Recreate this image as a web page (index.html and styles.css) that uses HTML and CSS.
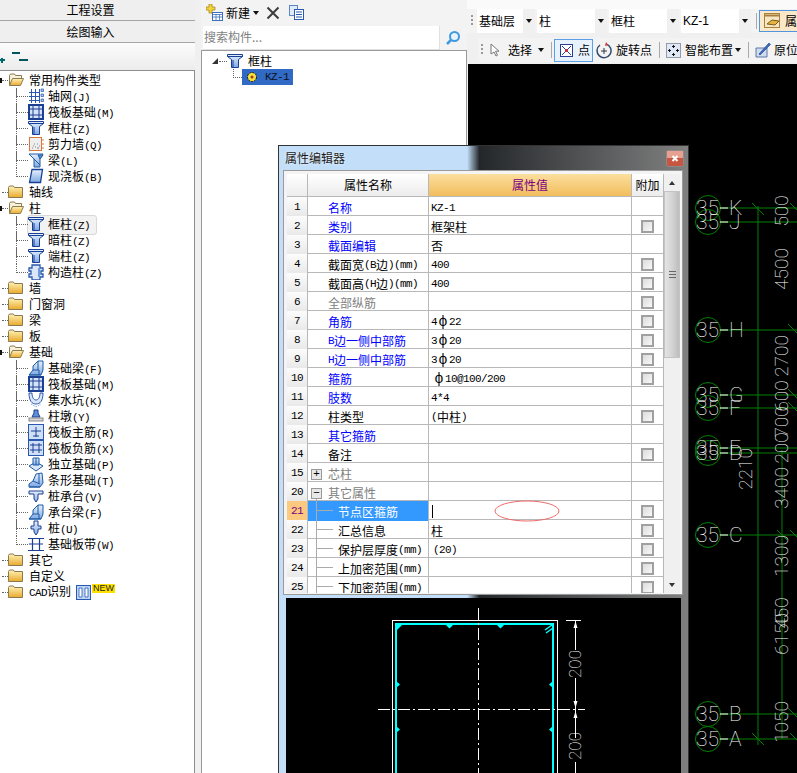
FILE: index.html
```html
<!DOCTYPE html>
<html lang="zh-CN">
<head>
<meta charset="utf-8">
<title>属性编辑器</title>
<link rel="stylesheet" href="styles.css">
</head>
<body>
<svg class="defs" aria-hidden="true">
  <defs>
    <linearGradient id="gy" x1="0" y1="0" x2="0" y2="1"><stop offset="0" stop-color="#fff3b8"/><stop offset="1" stop-color="#e9a92c"/></linearGradient>
    <linearGradient id="gb" x1="0" y1="0" x2="0" y2="1"><stop offset="0" stop-color="#e8f1fc"/><stop offset="1" stop-color="#7fa8e2"/></linearGradient>
    <symbol id="fold" viewBox="0 0 16 16"><path d="M.5 3.5l1-1.500h4l1 1.500h8v10h-14z" fill="url(#gy)" stroke="#8a7a50"/></symbol>
    <symbol id="fopen" viewBox="0 0 16 16"><path d="M1.500 13.500v-10l1-1.500h4l1 1.500h6v3" fill="#f6f0dc" stroke="#8a7a50"/><path d="M1.500 13.500l3-7h11l-3 7z" fill="url(#gy)" stroke="#8a7a50"/></symbol>
    <symbol id="col" viewBox="0 0 16 16"><path d="M.5 1.500h15v2l-4 3v8h-7v-8l-4-3z" fill="url(#gb)" stroke="#173f96"/><path d="M.5 3.500h15M6 7v7" fill="none" stroke="#173f96"/></symbol>
    <symbol id="grid" viewBox="0 0 16 16"><path d="M3.500 1v14M7.500 1v14M11.500 1v14M1 4.500h11M1 8.500h11M1 12.500h11" fill="none" stroke="#2a58b0"/><path d="M13 1h2.500v2.500H13zM13 6h2.500v2.500H13zM13 11h2.500v2.500H13z" fill="#a9c4ee" stroke="#2a58b0" stroke-width=".7"/></symbol>
    <symbol id="raft" viewBox="0 0 16 16"><rect x="1" y="1" width="14" height="14" fill="#d5e3f7" stroke="#1c3f94" stroke-width="2"/><path d="M5 1v14M11 1v14M1 5h14M1 11h14" fill="none" stroke="#1c3f94"/></symbol>
    <symbol id="wall" viewBox="0 0 16 16"><rect x="1.500" y="1.500" width="12" height="13" fill="#eee" stroke="#d8783c"/><path d="M4 12h1M7 11h1M9 12h2M6 8h1M9 8h1M11 10h1M5 10h1" stroke="#888"/><path d="M14 4h2M14 8h2M14 12h2" stroke="#d8783c"/></symbol>
    <symbol id="beam" viewBox="0 0 16 16"><path d="M1 2h14l-3 5v8H6V7z" fill="url(#gb)" stroke="#1c5aa6"/><path d="M10 3l5 0-3 4zM6 7l6 6" fill="#5f93d6" stroke="#1c5aa6"/></symbol>
    <symbol id="slab" viewBox="0 0 16 16"><path d="M4 1.500h10.500l-2 13H1.500z" fill="url(#gb)" stroke="#173f96" stroke-width="1.300"/></symbol>
    <symbol id="gz" viewBox="0 0 16 16"><path d="M4 1h8v3h3v3h-2v3h2v3h-3v3H4v-3H1v-3h2V7H1V4h3z" fill="#dbe7f8" stroke="#2a58b0" stroke-width="1.300"/><path d="M10 4h2v9h-2z" fill="#6f98d8"/></symbol>
    <symbol id="fbeam" viewBox="0 0 16 16"><path d="M1 15l4-5V6l5-5h5v9l-2 5z" fill="url(#gb)" stroke="#1c5aa6"/><path d="M5 10h6v5M1 15h12M10 1v9" fill="none" stroke="#1c5aa6"/></symbol>
    <symbol id="pit" viewBox="0 0 16 16"><path d="M1 1h3c0 5 2 7 4 7s4-2 4-7h3c0 8-3 11-7 11S1 9 1 1z" fill="#dbe7f8" stroke="#2a58b0"/><path d="M3 12l5 3 5-3" fill="none" stroke="#6f98d8" stroke-dasharray="1 1"/></symbol>
    <symbol id="pier" viewBox="0 0 16 16"><path d="M6 2h4v3l2 4H4l2-4z" fill="#5f8fd6" stroke="#1c3f94"/><rect x="1" y="10" width="14" height="3" fill="#d8d8d8" stroke="#888"/></symbol>
    <symbol id="rmain" viewBox="0 0 16 16"><rect x=".5" y=".5" width="15" height="15" fill="#cfdff6" stroke="#2a58b0"/><path d="M8 3v10M3 7h10M5 12h6" fill="none" stroke="#1c3f94"/></symbol>
    <symbol id="rneg" viewBox="0 0 16 16"><rect x=".5" y=".5" width="15" height="15" fill="#cfdff6" stroke="#2a58b0"/><path d="M2 5h12M2 10h12M5 3v10M11 3v10" fill="none" stroke="#1c3f94"/></symbol>
    <symbol id="ifound" viewBox="0 0 16 16"><path d="M1 10l7-4 7 4-7 5z" fill="#dbe7f8" stroke="#1c5aa6"/><path d="M5 2h6v7H5z" fill="url(#gb)" stroke="#1c5aa6"/><path d="M8 2v7" stroke="#1c5aa6"/></symbol>
    <symbol id="strip" viewBox="0 0 16 16"><path d="M1 15v-3l4-3 3-7 6-1 1 10-3 4z" fill="url(#gb)" stroke="#1c5aa6"/><path d="M1 15h11M5 9l7 3M11 2v9" fill="none" stroke="#1c5aa6"/></symbol>
    <symbol id="cap" viewBox="0 0 16 16"><path d="M1 3h14v3H10v5l-2 3-2-3V6H1z" fill="url(#gb)" stroke="#1c3f94"/></symbol>
    <symbol id="pile" viewBox="0 0 16 16"><path d="M6 1h4v5h3v3h-3v3l-2 3-2-3V9H3V6h3z" fill="url(#gb)" stroke="#1c3f94"/></symbol>
    <symbol id="band" viewBox="0 0 16 16"><path d="M0 2.500h16M0 14.500h16M4.500 3v11M11.500 3v11M1 8h14" fill="none" stroke="#1c3f94" stroke-width="1.200"/></symbol>
  </defs>
</svg>

<div class="app">
  <aside class="left">
    <div class="nav-btn">工程设置</div>
    <div class="nav-btn">绘图输入</div>
    <div class="tree-tools">
      <svg class="tools-svg" width="30" height="14" viewBox="0 0 30 14"><path d="M0 8h5M2 6v5" stroke="#006a6a" stroke-width="2"/><path d="M12 1h8M19 8h9" stroke="#00565a" stroke-width="2"/></svg>
    </div>
    <div class="tree">
      <div class="top"><i class="exp"></i><i class="dash"></i><svg class="ic"><use href="#fopen"/></svg><span>常用构件类型</span></div>
      <div class="kids">
        <div class="kid"><i class="hook"></i><svg class="ic"><use href="#grid"/></svg><span class="lab">轴网<b class="m">(J)</b></span></div>
        <div class="kid"><i class="hook"></i><svg class="ic"><use href="#raft"/></svg><span class="lab">筏板基础<b class="m">(M)</b></span></div>
        <div class="kid"><i class="hook"></i><svg class="ic"><use href="#col"/></svg><span class="lab">框柱<b class="m">(Z)</b></span></div>
        <div class="kid"><i class="hook"></i><svg class="ic"><use href="#wall"/></svg><span class="lab">剪力墙<b class="m">(Q)</b></span></div>
        <div class="kid"><i class="hook"></i><svg class="ic"><use href="#beam"/></svg><span class="lab">梁<b class="m">(L)</b></span></div>
        <div class="kid"><i class="hook"></i><svg class="ic"><use href="#slab"/></svg><span class="lab">现浇板<b class="m">(B)</b></span></div>
      </div>
      <div class="top"><i class="noexp"></i><i class="dash"></i><svg class="ic"><use href="#fold"/></svg><span>轴线</span></div>
      <div class="top"><i class="exp"></i><i class="dash"></i><svg class="ic"><use href="#fopen"/></svg><span>柱</span></div>
      <div class="kids">
        <div class="kid"><i class="hook"></i><svg class="ic"><use href="#col"/></svg><span class="lab current">框柱<b class="m">(Z)</b></span></div>
        <div class="kid"><i class="hook"></i><svg class="ic"><use href="#col"/></svg><span class="lab">暗柱<b class="m">(Z)</b></span></div>
        <div class="kid"><i class="hook"></i><svg class="ic"><use href="#col"/></svg><span class="lab">端柱<b class="m">(Z)</b></span></div>
        <div class="kid"><i class="hook"></i><svg class="ic"><use href="#gz"/></svg><span class="lab">构造柱<b class="m">(Z)</b></span></div>
      </div>
      <div class="top"><i class="noexp"></i><i class="dash"></i><svg class="ic"><use href="#fold"/></svg><span>墙</span></div>
      <div class="top"><i class="noexp"></i><i class="dash"></i><svg class="ic"><use href="#fold"/></svg><span>门窗洞</span></div>
      <div class="top"><i class="noexp"></i><i class="dash"></i><svg class="ic"><use href="#fold"/></svg><span>梁</span></div>
      <div class="top"><i class="noexp"></i><i class="dash"></i><svg class="ic"><use href="#fold"/></svg><span>板</span></div>
      <div class="top"><i class="exp"></i><i class="dash"></i><svg class="ic"><use href="#fopen"/></svg><span>基础</span></div>
      <div class="kids">
        <div class="kid"><i class="hook"></i><svg class="ic"><use href="#fbeam"/></svg><span class="lab">基础梁<b class="m">(F)</b></span></div>
        <div class="kid"><i class="hook"></i><svg class="ic"><use href="#raft"/></svg><span class="lab">筏板基础<b class="m">(M)</b></span></div>
        <div class="kid"><i class="hook"></i><svg class="ic"><use href="#pit"/></svg><span class="lab">集水坑<b class="m">(K)</b></span></div>
        <div class="kid"><i class="hook"></i><svg class="ic"><use href="#pier"/></svg><span class="lab">柱墩<b class="m">(Y)</b></span></div>
        <div class="kid"><i class="hook"></i><svg class="ic"><use href="#rmain"/></svg><span class="lab">筏板主筋<b class="m">(R)</b></span></div>
        <div class="kid"><i class="hook"></i><svg class="ic"><use href="#rneg"/></svg><span class="lab">筏板负筋<b class="m">(X)</b></span></div>
        <div class="kid"><i class="hook"></i><svg class="ic"><use href="#ifound"/></svg><span class="lab">独立基础<b class="m">(P)</b></span></div>
        <div class="kid"><i class="hook"></i><svg class="ic"><use href="#strip"/></svg><span class="lab">条形基础<b class="m">(T)</b></span></div>
        <div class="kid"><i class="hook"></i><svg class="ic"><use href="#cap"/></svg><span class="lab">桩承台<b class="m">(V)</b></span></div>
        <div class="kid"><i class="hook"></i><svg class="ic"><use href="#fbeam"/></svg><span class="lab">承台梁<b class="m">(F)</b></span></div>
        <div class="kid"><i class="hook"></i><svg class="ic"><use href="#pile"/></svg><span class="lab">桩<b class="m">(U)</b></span></div>
        <div class="kid"><i class="hook"></i><svg class="ic"><use href="#band"/></svg><span class="lab">基础板带<b class="m">(W)</b></span></div>
      </div>
      <div class="top"><i class="noexp"></i><i class="dash"></i><svg class="ic"><use href="#fold"/></svg><span>其它</span></div>
      <div class="top"><i class="noexp"></i><i class="dash"></i><svg class="ic"><use href="#fold"/></svg><span>自定义</span></div>
      <div class="top"><i class="noexp"></i><i class="dash"></i><svg class="ic"><use href="#fold"/></svg><span><b class="m">CAD</b>识别</span>
        <svg class="cad-ic" width="15" height="15" viewBox="0 0 15 15"><rect x=".5" y=".5" width="14" height="14" fill="#bcd6f5" stroke="#2a58b0"/><path d="M3 3h3v9H3zM9 3h3v9H9z" fill="#fff" stroke="#2a58b0" stroke-width=".8"/></svg>
        <span class="new">NEW</span>
      </div>
    </div>
  </aside>

  <div class="split"></div>

  <section class="mid">
    <div class="mid-tools">
      <svg class="tb-new" width="17" height="17" viewBox="0 0 17 17"><path d="M3 0h3v3h3v3H6v3H3V6H0V3h3z" fill="#f3d23c" stroke="#a78a1c" stroke-width=".8"/><rect x="6.500" y="8.500" width="10" height="8" fill="#fff" stroke="#3b6fc0"/><path d="M6.500 10.500h10M6.500 13h10M10 10v6M13.500 10v6" stroke="#3b6fc0" stroke-width=".8"/></svg>
      <span class="tb-label">新建</span><i class="caret tb-caret"></i>
      <svg class="tb-x" width="14" height="14" viewBox="0 0 14 14"><path d="M1.500 1.500l11 11M12.500 1.500l-11 11" stroke="#3c3c3c" stroke-width="2"/></svg>
      <svg class="tb-copy" width="15" height="15" viewBox="0 0 15 15"><rect x=".5" y=".5" width="8" height="10" fill="#dfeafa" stroke="#5f86c4"/><rect x="5.500" y="4.500" width="9" height="10" fill="#fff" stroke="#2a58b0"/><path d="M7 7h6M7 9.500h6M7 12h6" stroke="#2a58b0"/></svg>
    </div>
    <div class="search">
      <div class="search-box">搜索构件...</div>
      <svg class="search-ic" width="16" height="16" viewBox="0 0 16 16"><circle cx="9.500" cy="6.500" r="4.500" fill="#eaf4fc" stroke="#3f9ae0" stroke-width="2"/><path d="M6 10l-4 4" stroke="#3f9ae0" stroke-width="2.500"/></svg>
    </div>
    <div class="comp-tree">
      <div class="comp-root"><i class="tri"></i><i class="comp-dash"></i><svg class="ic"><use href="#col"/></svg><span class="comp-name">框柱</span></div>
      <div class="comp-kid"><i class="comp-hook"></i>
        <div class="comp-sel">
          <svg width="12" height="12" viewBox="0 0 12 12"><circle cx="6" cy="6" r="4.500" fill="#f5e23a" stroke="#111" stroke-dasharray="2 1"/><circle cx="6" cy="6" r="1.500" fill="#a33"/></svg>
          <span class="m">KZ-1</span>
        </div>
      </div>
    </div>
  </section>

  <main class="right">
    <div class="strip"></div>
    <div class="bar bar-one">
      <i class="grip"></i>
      <div class="combo c-first"><span>基础层</span><i class="c-arrow"><i class="caret"></i></i></div>
      <div class="combo"><span>柱</span><i class="c-arrow"><i class="caret"></i></i></div>
      <div class="combo"><span>框柱</span><i class="c-arrow"><i class="caret"></i></i></div>
      <div class="combo"><span class="ks">KZ-1</span><i class="c-arrow"><i class="caret"></i></i></div>
      <i class="sep sep-a"></i>
      <div class="active-btn"><svg width="18" height="16" viewBox="0 0 18 16"><rect x=".5" y=".5" width="15" height="14" fill="#f6e7c4" stroke="#a8803c"/><path d="M1 2.500h14" stroke="#a8803c" stroke-width="2"/><path d="M3 11l5-4 7 1-4 4z" fill="#e6b440" stroke="#7c5a1c"/></svg><span>属性</span></div>
    </div>
    <div class="bar bar-two">
      <i class="grip"></i>
      <svg class="t-cursor" width="10" height="14" viewBox="0 0 10 14"><path d="M1 1v10l3-2 2 4 1.500-.8-2-4H9z" fill="#fff" stroke="#777"/></svg>
      <span class="t-sel">选择</span><i class="caret t-sel-c"></i>
      <i class="sep t-s1"></i>
      <div class="pt-btn"><svg width="13" height="13" viewBox="0 0 13 13"><rect x=".5" y=".5" width="12" height="12" fill="#fff" stroke="#2a3f94"/><path d="M2 2l9 9M11 2l-9 9" stroke="#2a3f94"/><circle cx="6.500" cy="6.500" r="1.500" fill="#d22"/></svg><span>点</span></div>
      <svg class="t-rot" width="16" height="17" viewBox="0 0 16 17"><path d="M4 3a7 7 0 1 0 6-1" fill="none" stroke="#334a6e" stroke-width="1.500"/><path d="M8 6v6M5 9h6" stroke="#334" /><path d="M10 0l2 3-3 1z" fill="#d33"/></svg>
      <span class="t-rot-l">旋转点</span>
      <i class="sep t-s2"></i>
      <svg class="t-smart" width="15" height="15" viewBox="0 0 15 15"><rect x=".5" y=".5" width="14" height="14" fill="#dfe8f5" stroke="#446" stroke-dasharray="1 1"/><path d="M7.500 2v3M6 3.500h3M7.500 10v3M6 11.500h3M3.500 6v3M2 7.500h3M11.500 6v3M10 7.500h3" stroke="#111"/></svg>
      <span class="t-smart-l">智能布置</span><i class="caret t-smart-c"></i>
      <i class="sep t-s3"></i>
      <svg class="t-orig" width="16" height="16" viewBox="0 0 16 16"><path d="M1 6h11v9H1z" fill="#cfdcf0" stroke="#5f76a4"/><path d="M4 12L14 1l1.500 1.500L5 13z" fill="#3d6fc4" stroke="#24468a" stroke-width=".7"/></svg>
      <span class="t-orig-l">原位</span>
    </div>
    <div class="canvas">
      <svg class="cad" width="329" height="709" viewBox="468 64 329 709">
        <g class="gl">
          <path d="M758 206V745M782 450V739"/>
          <path d="M719 208H797M719 222H797M719 330H797M719 395H797M719 408H797M719 448H797M719 453H797M719 535H797M719 714H797M719 739H797"/>
          <path d="M752 203l12 12M790 203l8 8M788 324l10 10M788 389l10 10M788 402l10 10M777 530l10 10M790 530l8 8M788 708l10 10M752 733l12 12M790 733l8 8"/>
          <circle cx="708" cy="208" r="12.500"/><circle cx="708" cy="222" r="12.500"/><circle cx="708" cy="330" r="12.500"/><circle cx="708" cy="395" r="12.500"/><circle cx="708" cy="408" r="12.500"/><circle cx="708" cy="448" r="12.500"/><circle cx="708" cy="453" r="12.500"/><circle cx="708" cy="535" r="12.500"/><circle cx="708" cy="714" r="12.500"/><circle cx="708" cy="739" r="12.500"/>
        </g>
        <g class="tx">
          <text x="696" y="215">35</text><text x="696" y="229">35</text><text x="696" y="337">35</text><text x="696" y="402">35</text><text x="696" y="415">35</text><text x="696" y="455">35</text><text x="696" y="460">35</text><text x="696" y="542">35</text><text x="696" y="721">35</text><text x="696" y="746">35</text>
          <path class="tick" d="M720 208h8M720 222h8M720 330h8M720 395h8M720 408h8M720 448h8M720 453h8M720 535h8M720 714h8M720 739h8"/>
          <text x="729" y="215">K</text><text x="729" y="229">J</text><text x="729" y="337">H</text><text x="729" y="402">G</text><text x="729" y="415">F</text><text x="729" y="455">E</text><text x="729" y="460">D</text><text x="729" y="542">C</text><text x="729" y="721">B</text><text x="729" y="746">A</text>
          <text class="dim" transform="translate(788 211) rotate(-90)">500</text>
          <text class="dim" transform="translate(788 269) rotate(-90)">4500</text>
          <text class="dim" transform="translate(788 356) rotate(-90)">2700</text>
          <text class="dim" transform="translate(788 396) rotate(-90)">600</text>
          <text class="dim" transform="translate(788 422) rotate(-90)">700</text>
          <text class="dim" transform="translate(788 448) rotate(-90)">200</text>
          <text class="dim" transform="translate(788 488) rotate(-90)">3400</text>
          <text class="dim" transform="translate(788 556) rotate(-90)">1300</text>
          <text class="dim" transform="translate(788 634) rotate(-90)">6150</text>
          <text class="dim" transform="translate(788 613) rotate(-90)">450</text>
          <text class="dim" transform="translate(788 722) rotate(-90)">1050</text>
          <text class="dim" transform="translate(752 469) rotate(-90)">2210</text>
        </g>
      </svg>
    </div>
  </main>
</div>

<div class="dialog">
  <header class="d-title">
    <span>属性编辑器</span>
    <svg class="d-close" width="18" height="17" viewBox="0 0 18 17"><rect x=".5" y=".5" width="17" height="16" rx="2" fill="#c8553f" stroke="#8a8a8a"/><rect x="1" y="1" width="16" height="7" fill="#e8a090"/><path d="M6.500 6l5 5M11.500 6l-5 5" stroke="#fff" stroke-width="2"/></svg>
  </header>
  <div class="grid-frame">
    <div class="grid">
      <div class="g-row g-head"><div class="g-no"></div><div class="g-hn">属性名称</div><div class="g-hv">属性值</div><div class="g-hx">附加</div></div>
      <div class="g-row"><div class="g-no">1</div><div class="g-name blue">名称</div><div class="g-val m">KZ-1</div><div class="g-x"></div></div>
      <div class="g-row"><div class="g-no">2</div><div class="g-name blue">类别</div><div class="g-val">框架柱</div><div class="g-x"><i class="chk"></i></div></div>
      <div class="g-row"><div class="g-no">3</div><div class="g-name blue">截面编辑</div><div class="g-val">否</div><div class="g-x"></div></div>
      <div class="g-row"><div class="g-no">4</div><div class="g-name">截面宽<b class="m">(B</b>边<b class="m">)(mm)</b></div><div class="g-val m">400</div><div class="g-x"><i class="chk"></i></div></div>
      <div class="g-row"><div class="g-no">5</div><div class="g-name">截面高<b class="m">(H</b>边<b class="m">)(mm)</b></div><div class="g-val m">400</div><div class="g-x"><i class="chk"></i></div></div>
      <div class="g-row"><div class="g-no">6</div><div class="g-name gray">全部纵筋</div><div class="g-val"></div><div class="g-x"><i class="chk"></i></div></div>
      <div class="g-row"><div class="g-no">7</div><div class="g-name blue">角筋</div><div class="g-val m">4<b class="rb">ф</b>22</div><div class="g-x"><i class="chk"></i></div></div>
      <div class="g-row"><div class="g-no">8</div><div class="g-name blue"><b class="m">B</b>边一侧中部筋</div><div class="g-val m">3<b class="rb">ф</b>20</div><div class="g-x"><i class="chk"></i></div></div>
      <div class="g-row"><div class="g-no">9</div><div class="g-name blue"><b class="m">H</b>边一侧中部筋</div><div class="g-val m">3<b class="rb">ф</b>20</div><div class="g-x"><i class="chk"></i></div></div>
      <div class="g-row"><div class="g-no">10</div><div class="g-name blue">箍筋</div><div class="g-val m"><b class="rb rb-lead">ф</b>10@100/200</div><div class="g-x"><i class="chk"></i></div></div>
      <div class="g-row"><div class="g-no">11</div><div class="g-name blue">肢数</div><div class="g-val m">4*4</div><div class="g-x"></div></div>
      <div class="g-row"><div class="g-no">12</div><div class="g-name">柱类型</div><div class="g-val"><b class="m">(</b>中柱<b class="m">)</b></div><div class="g-x"><i class="chk"></i></div></div>
      <div class="g-row"><div class="g-no">13</div><div class="g-name blue">其它箍筋</div><div class="g-val"></div><div class="g-x"></div></div>
      <div class="g-row"><div class="g-no">14</div><div class="g-name">备注</div><div class="g-val"></div><div class="g-x"><i class="chk"></i></div></div>
      <div class="g-row"><div class="g-no">15</div><div class="g-name gray has-box"><i class="box">+</i>芯柱</div><div class="g-val"></div><div class="g-x"></div></div>
      <div class="g-row"><div class="g-no">20</div><div class="g-name gray has-box"><i class="box box-open">−</i>其它属性</div><div class="g-val"></div><div class="g-x"></div></div>
      <div class="g-row"><div class="g-no g-no-sel">21</div><div class="g-name has-stem g-name-sel"><i class="stem"></i>节点区箍筋</div><div class="g-val"><i class="text-caret"></i></div><div class="g-x"><i class="chk"></i></div></div>
      <div class="g-row"><div class="g-no">22</div><div class="g-name has-stem"><i class="stem"></i>汇总信息</div><div class="g-val">柱</div><div class="g-x"><i class="chk"></i></div></div>
      <div class="g-row"><div class="g-no">23</div><div class="g-name has-stem"><i class="stem"></i>保护层厚度<b class="m">(mm)</b></div><div class="g-val m val-in">(20)</div><div class="g-x"><i class="chk"></i></div></div>
      <div class="g-row"><div class="g-no">24</div><div class="g-name has-stem"><i class="stem"></i>上加密范围<b class="m">(mm)</b></div><div class="g-val"></div><div class="g-x"><i class="chk"></i></div></div>
      <div class="g-row"><div class="g-no">25</div><div class="g-name has-stem"><i class="stem"></i>下加密范围<b class="m">(mm)</b></div><div class="g-val"></div><div class="g-x"><i class="chk"></i></div></div>
    </div>
    <div class="sb">
      <div class="sb-arrow"><i class="tri-up"></i></div>
      <div class="sb-thumb"><i class="sb-grip"></i></div>
      <div class="sb-track"></div>
      <div class="sb-arrow"><i class="tri-down"></i></div>
    </div>
    <svg class="mark" width="66" height="22" viewBox="0 0 66 22"><ellipse cx="33" cy="11" rx="32" ry="10" fill="none" stroke="#ee6a6a"/></svg>
  </div>
  <div class="preview">
    <svg class="pv" width="395" height="175" viewBox="286 598 395 175">
      <rect x="392.500" y="620.500" width="165" height="200" fill="none" stroke="#fff"/>
      <rect x="396" y="624" width="157" height="190" fill="none" stroke="#00ffff" stroke-width="2"/>
      <path d="M478.500 608V773M378 709.500H585" fill="none" stroke="#fff" stroke-dasharray="12 3 2 3"/>
      <path d="M566 620.500h15M575.500 620V650M575.500 678V738M575.500 762V773" fill="none" stroke="#fff"/>
      <path d="M575.500 621l-2 7h4zM575.500 708l-2-7h4zM575.500 711l-2 7h4z" fill="#fff"/>
      <path d="M397 625h5l-5 5zM446 625h7l-3.500 3.500zM497 625h7l-3.500 3.500zM396 681l4 3.500-4 3.500zM396 726l4 3.500-4 3.500zM553 681l-4 3.500 4 3.500zM553 726l-4 3.500 4 3.500z" fill="#00ffff"/>
      <path d="M545 630l7-5M546 633l7-5" fill="none" stroke="#00ffff" stroke-width="1.500"/>
      <g class="tx pv-tx">
        <text transform="translate(581 664) rotate(-90)">200</text>
        <text transform="translate(581 746) rotate(-90)">200</text>
      </g>
    </svg>
  </div>
</div>
</body>
</html>
```
FILE: styles.css
```css
* { box-sizing: border-box; }
html, body { margin: 0; height: 100%; overflow: hidden; }
body {
  width: 797px;
  height: 773px;
  position: relative;
  background: #f0f0f0;
  color: #000;
  font: 12px/16px "Noto Sans CJK SC", "Liberation Sans", sans-serif;
}
i, b { font-style: normal; font-weight: normal; }
.defs { position: absolute; width: 0; height: 0; }
.m {
  font-family: "Liberation Mono", "Noto Sans CJK SC", monospace;
  font-size: 11px;
  letter-spacing: -0.6px;
}
.app { display: flex; height: 773px; }

/* left */
.left { width: 195px; display: flex; flex-direction: column; flex: none; }
.nav-btn {
  height: 21px;
  line-height: 20px;
  padding-right: 14px;
  text-align: center;
  background: #efefef;
  border-bottom: 1px solid #a5a5a5;
}
.nav-btn + .nav-btn { height: 22px; line-height: 21px; }
.tree-tools {
  height: 27px;
  background: linear-gradient(#fcfcfc, #ececec);
  padding-top: 9px;
}
.tools-svg { display: block; }
.tree {
  flex: 1;
  position: relative;
  z-index: 0;
  background: #fff;
  border-top: 1px solid #8d8d8d;
  border-right: 1px solid #8d8d8d;
  padding-top: 1px;
  overflow: hidden;
}
.top { display: flex; align-items: center; height: 16px; }
.exp { width: 2px; height: 5px; background: #111; flex: none; }
.noexp { width: 2px; flex: none; }
.dash { width: 6px; border-top: 1px dotted #666; flex: none; }
.ic { width: 16px; height: 16px; flex: none; }
.top > span:first-of-type { margin-left: 5px; }
.kids { margin-left: 16px; }
.kid {
  display: flex;
  align-items: flex-start;
  height: 16px;
  border-left: 1px dotted #666;
}
.kid:last-child { border-left-color: transparent; }
.hook {
  width: 12px;
  height: 9px;
  margin-left: -1px;
  border-left: 1px dotted #666;
  border-bottom: 1px dotted #666;
  flex: none;
}
.lab { margin-left: 4px; }
.current { position: relative; }
.current::before {
  content: "";
  position: absolute;
  left: -21px;
  top: -1px;
  width: 68px;
  height: 18px;
  border: 1px solid #d8d8d8;
  border-radius: 3px;
  background: #f2f2f2;
  z-index: -1;
}
.cad-ic { margin-left: 5px; flex: none; }
.new {
  align-self: flex-start;
  height: 9px;
  margin-left: 1px;
  padding: 0 1px;
  background: #ffe100;
  color: #222;
  font: 9px/9px "Liberation Sans", sans-serif;
}
.split { width: 6px; flex: none; background: #f0f0f0; }

/* middle */
.mid { width: 266px; flex: none; display: flex; flex-direction: column; }
.mid-tools {
  height: 25px;
  display: flex;
  align-items: center;
  background: #f3f3f3;
}
.tb-new { margin-left: 5px; }
.tb-label { margin-left: 3px; }
.caret {
  display: inline-block;
  width: 0;
  height: 0;
  border: 3px solid transparent;
  border-top: 4px solid #111;
  border-bottom: 0;
}
.tb-caret { margin-left: 3px; }
.tb-x { margin-left: 7px; }
.tb-copy { margin-left: 9px; }
.search {
  height: 25px;
  display: flex;
  align-items: center;
  padding-left: 2px;
  background: #f3f3f3;
}
.search-box {
  width: 237px;
  height: 24px;
  line-height: 22px;
  padding-left: 1px;
  background: #fff;
  border-right: 1px solid #e0e0e0;
  border-bottom: 1px solid #e0e0e0;
  color: #7f7f7f;
}
.search-ic { margin-left: 5px; }
.comp-tree {
  flex: 1;
  background: #fff;
  border: 1px solid #9a9a9a;
  border-bottom: 0;
  padding: 2px 0 0 10px;
}
.comp-root { display: flex; align-items: center; height: 16px; }
.tri {
  width: 0;
  height: 0;
  border-left: 6px solid transparent;
  border-bottom: 6px solid #333;
  flex: none;
}
.comp-dash { width: 8px; margin-left: 1px; border-top: 1px dotted #666; flex: none; }
.comp-name { margin-left: 5px; }
.comp-kid { display: flex; height: 16px; padding-left: 21px; }
.comp-hook {
  width: 9px;
  height: 9px;
  border-left: 1px dotted #666;
  border-bottom: 1px dotted #666;
  flex: none;
}
.comp-sel {
  width: 51px;
  height: 16px;
  display: flex;
  align-items: center;
  padding-left: 4px;
  gap: 7px;
  background: #316ac5;
  color: #0c1020;
}

/* right */
.right { width: 330px; flex: none; display: flex; flex-direction: column; overflow: hidden; }
.strip { height: 9px; background: #fafafa; }
.bar { display: flex; align-items: center; height: 24px; background: #f3f3f3; flex: none; }
.bar-one { padding-left: 4px; }
.grip {
  width: 2px;
  height: 12px;
  flex: none;
  background: repeating-linear-gradient(#999 0 2px, transparent 2px 4px);
}
.combo {
  width: 70px;
  height: 24px;
  display: flex;
  justify-content: space-between;
  margin-left: 2px;
  padding-left: 2px;
  background: #fff;
  line-height: 24px;
  flex: none;
}
.c-first { width: 58px; margin-left: 4px; }
.ks { font-family: "Liberation Sans", sans-serif; }
.c-arrow {
  width: 12px;
  display: flex;
  align-items: center;
  justify-content: center;
  background: #f0f0f0;
}
.sep { width: 1px; height: 16px; background: #aaa; flex: none; }
.sep-a { margin-left: 5px; }
.active-btn {
  margin-left: 2px;
  width: 60px;
  height: 22px;
  display: flex;
  align-items: center;
  gap: 3px;
  padding-left: 4px;
  border: 1px solid #4f95e0;
  background: #fbe8c8;
  white-space: nowrap;
  flex: none;
}
.bar-two {
  margin-top: 5px;
  margin-left: 11px;
  padding-left: 3px;
  width: 319px;
}
.t-cursor { margin-left: 7px; flex: none; }
.t-sel { margin-left: 8px; flex: none; }
.t-sel-c { margin-left: 6px; flex: none; }
.t-s1 { margin-left: 7px; }
.pt-btn {
  margin-left: 2px;
  width: 39px;
  height: 23px;
  display: flex;
  align-items: center;
  gap: 5px;
  padding-left: 5px;
  border: 1px solid #5b9fe6;
  background: #e8f2fc;
  flex: none;
}
.t-rot { margin-left: 3px; flex: none; }
.t-rot-l { margin-left: 4px; flex: none; }
.t-s2 { margin-left: 7px; }
.t-smart { margin-left: 6px; flex: none; }
.t-smart-l { margin-left: 4px; flex: none; }
.t-smart-c { margin-left: 2px; flex: none; }
.t-s3 { margin-left: 7px; }
.t-orig { margin-left: 6px; flex: none; }
.t-orig-l { margin-left: 3px; white-space: nowrap; flex: none; }
.canvas {
  flex: 1;
  margin-left: 1px;
  margin-top: 2px;
  background: #000;
  overflow: hidden;
}
.cad { display: block; }
.gl { fill: none; stroke: #008000; stroke-width: 1; }
.tx text {
  font-family: Roboto, "Liberation Sans", sans-serif;
  font-weight: 100;
  font-size: 21px;
  fill: #fff;
}
.tx .dim { font-size: 19px; text-anchor: middle; }
.tick { stroke: #fff; fill: none; }
.pv-tx text { font-size: 17px; text-anchor: middle; }

/* dialog */
.dialog {
  position: absolute;
  left: 278px;
  top: 145px;
  width: 411px;
  height: 628px;
  display: flex;
  flex-direction: column;
  border: 1px solid #333;
  border-bottom: 0;
  background: linear-gradient(90deg, #c2def9 0, #c2def9 46%, #24272a 49%, #4a4c4e 70%, #808080 100%);
}
.d-title {
  height: 24px;
  flex: none;
  display: flex;
  align-items: center;
  justify-content: space-between;
  padding: 0 4px 0 6px;
  color: #1a1a1a;
  text-shadow: 0 0 3px #fff;
}
.grid-frame {
  position: relative;
  height: 425px;
  flex: none;
  margin: 0 5px 0 4px;
  padding: 3px 1px 1px 3px;
  display: flex;
  background: #f4f4f4;
  border: 1px solid #9a9a9a;
}
.grid { width: 377px; height: 419px; overflow: hidden; background: #fff; flex: none; }
.g-row {
  display: grid;
  grid-template-columns: 21px 121px 203px 32px;
  height: 19px;
  border-bottom: 1px solid #b8b8b8;
  line-height: 18px;
}
.g-row > div { border-right: 1px solid #b8b8b8; display: flex; align-items: center; white-space: nowrap; }
.g-head { height: 23px; line-height: 22px; }
.g-head > div { justify-content: center; background: linear-gradient(#fff, #ececec); }
.g-head .g-hv { background: linear-gradient(#fbdf9e, #f2bd5c); color: #800080; }
.g-no {
  justify-content: center;
  background: linear-gradient(#fcfcfc, #e8e8e8);
  font: 11px/18px "Liberation Mono", monospace;
  letter-spacing: -0.6px;
}
.g-no-sel { background: #fbc97f; color: #800080; }
.g-name { padding: 2px 0 0 20px; }
.g-name > .m { margin-top: -1px; }
.blue { color: #0000ff; }
.gray { color: #808080; }
.g-val { padding: 2px 0 0 2px; }
.val-in { padding-left: 4px; }
.rb {
  display: inline-block;
  width: 12px;
  text-align: center;
  font-size: 14px;
  letter-spacing: 0;
}
.rb-lead { margin-left: 2px; }
.g-x { justify-content: center; }
.chk {
  width: 13px;
  height: 13px;
  border: 2px solid #a0a0a0;
  background: linear-gradient(135deg, #dcdcdc, #f8f8f8);
}
.has-box { padding-left: 3px; }
.box {
  position: relative;
  width: 11px;
  height: 11px;
  margin-right: 6px;
  border: 1px solid #999;
  background: #e8e8e8;
  color: #000;
  font: 11px/9px "Liberation Mono", monospace;
  text-align: center;
  flex: none;
}
.box-open::after {
  content: "";
  position: absolute;
  left: 4px;
  top: 10px;
  width: 1px;
  height: 5px;
  background: #aaa;
}
.has-stem { padding-left: 8px; }
.stem {
  width: 22px;
  align-self: stretch;
  margin-top: -2px;
  flex: none;
  border-left: 1px solid #aaa;
  background: linear-gradient(#aaa, #aaa) 0 9px / 16px 1px no-repeat;
}
.g-name-sel { background: #3399ff; color: #fff; }
.text-caret { width: 1px; height: 13px; background: #000; margin: -2px 0 0 1px; }
.sb { width: 16px; height: 419px; flex: none; display: flex; flex-direction: column; background: #f0f0f0; }
.sb-arrow { height: 17px; display: flex; align-items: center; justify-content: center; flex: none; }
.tri-up, .tri-down { width: 0; height: 0; border: 3px solid transparent; }
.tri-up { border-bottom: 4px solid #333; border-top: 0; }
.tri-down { border-top: 4px solid #333; border-bottom: 0; }
.sb-thumb {
  height: 167px;
  flex: none;
  display: flex;
  align-items: center;
  justify-content: center;
  background: linear-gradient(90deg, #e4e4e4, #d4d4d4 50%, #bdbdbd);
  border: 1px solid #c4c4c4;
}
.sb-grip { width: 7px; height: 7px; background: repeating-linear-gradient(#666 0 1px, transparent 1px 3px); }
.sb-track { flex: 1; }
.mark { position: absolute; left: 210px; top: 329px; }
.preview {
  flex: 1;
  margin: 3px 7px 0;
  background: #000;
  overflow: hidden;
}
.pv { display: block; }
```
